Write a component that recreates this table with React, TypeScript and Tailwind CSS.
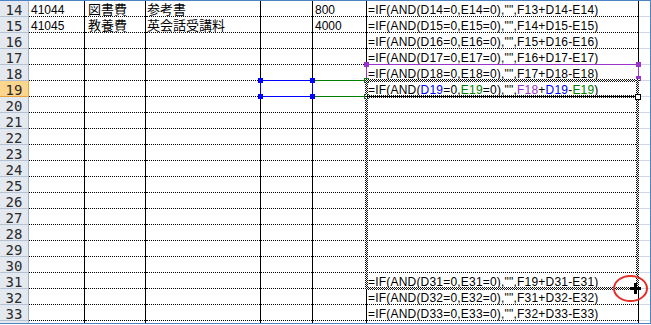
import type { ReactNode } from "react";

// Excel-style sheet: fill handle dragged from F19 down to F31
type Seg = { t: string; c?: string };
type Row = { n: number; a?: string; b?: string; c?: string; e?: string; f?: Seg[] };

const formula = (prev: number, r: number): Seg[] => [
  { t: `=IF(AND(D${r}=0,E${r}=0),"",F${prev}+D${r}-E${r})` },
];

const BLUE = "text-[#0000ff]";
const GREEN = "text-[#008000]";
const PURPLE = "text-[#9933cc]";

const rows: Row[] = [
  { n: 14, a: "41044", b: "図書費", c: "参考書", e: "800", f: formula(13, 14) },
  { n: 15, a: "41045", b: "教養費", c: "英会話受講料", e: "4000", f: formula(14, 15) },
  { n: 16, f: formula(15, 16) },
  { n: 17, f: formula(16, 17) },
  { n: 18, f: formula(17, 18) },
  {
    n: 19,
    f: [
      { t: "=IF(AND(" },
      { t: "D19", c: BLUE },
      { t: "=0," },
      { t: "E19", c: GREEN },
      { t: '=0),"",' },
      { t: "F18", c: PURPLE },
      { t: "+" },
      { t: "D19", c: BLUE },
      { t: "-" },
      { t: "E19", c: GREEN },
      { t: ")" },
    ],
  },
  ...[20, 21, 22, 23, 24, 25, 26, 27, 28, 29, 30].map((n) => ({ n })),
  { n: 31, f: formula(19, 31) },
  { n: 32, f: formula(31, 32) },
  { n: 33, f: formula(32, 33) },
];

function Cell({ w, pad = "pl-[2px]", children }: { w: string; pad?: string; children?: ReactNode }) {
  return (
    <div className={`flex shrink-0 flex-col border-r border-black ${w}`}>
      <div className={`h-[15px] whitespace-nowrap pt-[3px] leading-[12px] ${pad}`}>{children}</div>
      <div className="border-t border-dotted border-black" />
    </div>
  );
}

function SheetRow({ row }: { row: Row }) {
  const active = row.n === 19;
  return (
    <div className="flex h-[16px]">
      <div
        className={`flex w-[29px] shrink-0 flex-col border-r ${
          active ? "border-[#e9a23b] bg-[#fcd68d]" : "border-[#9eb0c6] bg-[#e4e9f0]"
        }`}
      >
        <div className="h-[15px] pt-[3px] text-center font-['DejaVu_Sans_Mono',monospace] text-[14px] leading-[12px] text-[#2a2a2a]">
          {row.n}
        </div>
        <div className={`border-t ${active ? "border-[#e9a23b]" : "border-[#b4c2d3]"}`} />
      </div>
      <Cell w="w-[56px]">{row.a}</Cell>
      <Cell w="w-[61px]" pad="pl-[3px] text-[13px]">{row.b}</Cell>
      <Cell w="w-[115px]" pad="pl-[1px] text-[13px]">{row.c}</Cell>
      <Cell w="w-[52px]" />
      <Cell w="w-[54px]" pad="pl-[2px]">{row.e}</Cell>
      <Cell w="w-[272px]" pad="pl-[1px] tracking-[0.2px]">
        {row.f?.map((s, i) => (
          <span key={i} className={s.c}>
            {s.t}
          </span>
        ))}
      </Cell>
      <div className="flex w-[11px] shrink-0 flex-col">
        <div className="h-[15px]" />
        <div className="border-t border-[#d0d7e5]" />
      </div>
    </div>
  );
}

const checker =
  "bg-[image:repeating-conic-gradient(#111111_0%_25%,#ffffff_0%_50%)] bg-[length:2px_2px]";

function Handle({ className }: { className: string }) {
  return <div className={`absolute h-[5px] w-[5px] ${className}`} />;
}

export default function App() {
  return (
    <div className="relative h-[325px] w-[651px] overflow-hidden bg-white font-['Liberation_Sans','Noto_Sans_CJK_JP',sans-serif] text-[12px] text-black">
      <div className="flex flex-col border-y border-r border-[#4f84c4]">
        {rows.map((r) => (
          <SheetRow key={r.n} row={r} />
        ))}
        <div className="flex h-[2px]">
          <div className="w-[29px] shrink-0 border-r border-[#9eb0c6] bg-[#e4e9f0]" />
          <div className="w-[56px] shrink-0 border-r border-black" />
          <div className="w-[61px] shrink-0 border-r border-black" />
          <div className="w-[115px] shrink-0 border-r border-black" />
          <div className="w-[52px] shrink-0 border-r border-black" />
          <div className="w-[54px] shrink-0 border-r border-black" />
          <div className="w-[272px] shrink-0 border-r border-black" />
        </div>
      </div>

      {/* precedent highlights */}
      <div className="absolute left-[366px] top-[64px] h-[16px] w-[273px] border border-[#9933cc]" />
      <div className="absolute left-[312px] top-[80px] h-[17px] w-[55px] border border-[#008000]" />
      <div className="absolute left-[260px] top-[80px] h-[17px] w-[53px] border border-[#0000ff]" />
      <Handle className="left-[364px] top-[62px] bg-[#9933cc]" />
      <Handle className="left-[636px] top-[62px] bg-[#9933cc]" />
      <Handle className="left-[636px] top-[76px] bg-[#9933cc]" />
      <Handle className="left-[310px] top-[78px] bg-[#008000]" />
      <Handle className="left-[364px] top-[78px] bg-[#008000]" />
      <Handle className="left-[310px] top-[94px] bg-[#008000]" />
      <Handle className="left-[364px] top-[94px] bg-[#008000]" />
      <Handle className="left-[258px] top-[78px] bg-[#0000ff]" />
      <Handle className="left-[310px] top-[78px] bg-[#0000ff]" />
      <Handle className="left-[258px] top-[94px] bg-[#0000ff]" />
      <Handle className="left-[310px] top-[94px] bg-[#0000ff]" />

      {/* fill range F19:F31 */}
      <div className={`absolute left-[365px] top-[79px] h-[3px] w-[275px] ${checker}`} />
      <div className={`absolute left-[365px] top-[79px] h-[211px] w-[3px] ${checker}`} />
      <div className={`absolute left-[636px] top-[79px] h-[211px] w-[3px] ${checker}`} />
      <div className={`absolute left-[365px] top-[287px] h-[3px] w-[274px] ${checker}`} />

      {/* active cell bottom + fill handle */}
      <div className={`absolute left-[366px] top-[95px] h-[3px] w-[272px] ${checker}`} />
      <div className="absolute left-[366px] top-[96px] h-[1px] w-[272px] bg-black" />
      <div className="absolute left-[635px] top-[94px] h-[6px] w-[6px] border border-black bg-white" />

      {/* cursor + annotation */}
      <svg className="absolute left-[630px] top-[283px]" width="11" height="11" viewBox="0 0 11 11">
        <rect x="4" y="0" width="3" height="11" fill="#000" />
        <rect x="0" y="4" width="11" height="3" fill="#000" />
      </svg>
      <div className="absolute left-[613px] top-[275px] h-[27px] w-[35px] rounded-[50%] border-2 border-[#e3302a]" />
    </div>
  );
}
